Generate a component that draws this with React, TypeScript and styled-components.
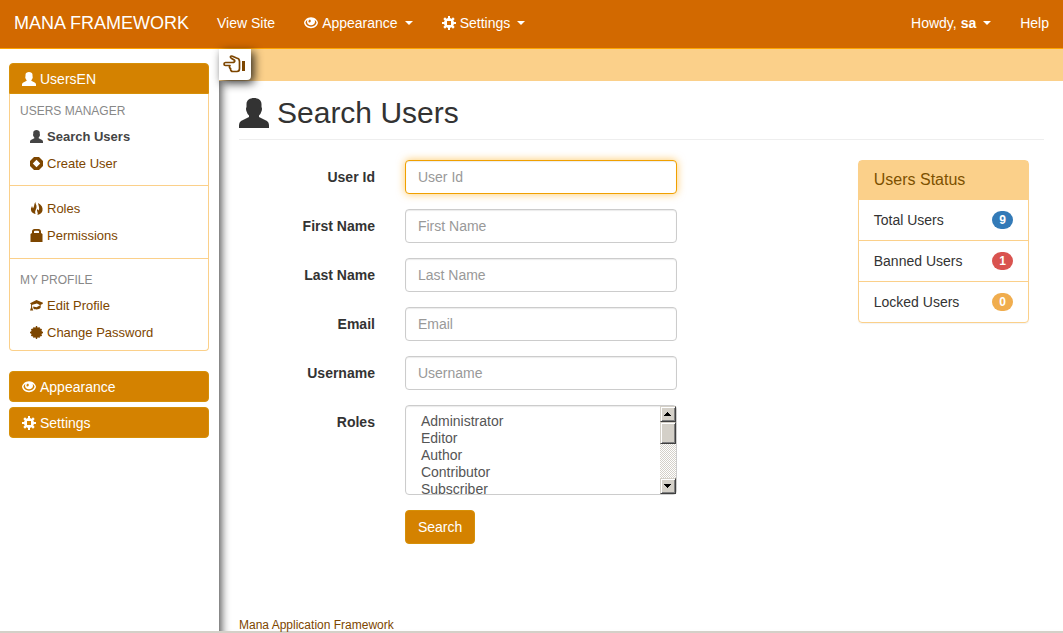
import React from 'react';
import styled, { createGlobalStyle, css } from 'styled-components';

const Global = createGlobalStyle`
  *, *::before, *::after { box-sizing: border-box; }
  body {
    margin: 0;
    background: #fff;
    color: #333;
    font: 14px/20px "Liberation Sans", Arial, sans-serif;
  }
  a { color: #7d4600; text-decoration: none; }
`;

const Page = styled.div`
  min-height: 100vh;
  display: flex;
  flex-direction: column;
  border-bottom: 2px solid #d4d0c8;
`;

const Navbar = styled.nav`
  display: flex;
  align-items: center;
  height: 49px;
  padding: 0 0 2px;
  background: #d26900;
  border-bottom: 1px solid #ffa500;
`;

const Brand = styled.a`
  padding: 0 13px 0 14px;
  font-size: 18px;
  color: #fff;
`;

const NavGroup = styled.div<{ $right?: boolean }>`
  display: flex;
  ${(p) => p.$right && css`margin-left: auto;`}
`;

const NavLink = styled.a`
  display: flex;
  align-items: center;
  gap: 4px;
  padding: 0 14px 0 15px;
  color: #fff;
`;

const Caret = styled.span`
  margin-left: 3px;
  border-top: 4px solid #fff;
  border-left: 4px solid transparent;
  border-right: 4px solid transparent;
`;

const Columns = styled.div`
  flex: 1;
  display: flex;
`;

const Sidebar = styled.aside`
  flex: 0 0 219px;
  padding: 14px 10px 0 9px;
`;

const SideToggle = styled.button<{ $open?: boolean }>`
  display: flex;
  align-items: center;
  gap: 4px;
  width: 100%;
  height: 31px;
  padding: 0 12px;
  font: inherit;
  color: #fff;
  background: #d48200;
  border: 1px solid #d69008;
  border-radius: ${(p) => (p.$open ? '4px 4px 0 0' : '4px')};
`;

const SidePanel = styled.section`
  & + & { margin-top: 5px; }
`;

const SideBody = styled.div`
  margin-bottom: 20px;
  border: 1px solid #fbd08a;
  border-top: 0;
  border-radius: 0 0 4px 4px;
`;

const SideGroup = styled.div`
  padding: 8px 10px;
  & + & { padding: 9px 10px; border-top: 1px solid #fbd08a; }
  & + &:last-child { padding: 12px 10px 4px; }
`;

const SideTitle = styled.h2`
  margin: 0 0 3px;
  font-size: 12px;
  line-height: 18px;
  font-weight: 400;
  text-transform: uppercase;
  color: #888;
`;

const SideLink = styled.a<{ $active?: boolean }>`
  display: flex;
  align-items: center;
  gap: 4px;
  height: 27px;
  padding-left: 10px;
  font-size: 13px;
  ${(p) => p.$active && css`color: #444; font-weight: 700;`}
`;

const Main = styled.main`
  flex: 1;
  min-width: 0;
  display: flex;
  flex-direction: column;
  box-shadow: inset 11px 0 10px -9px rgba(0, 0, 0, 0.75);
`;

const TopBand = styled.div`
  height: 32px;
  background: #fbd08a;
`;

const HideButton = styled.button`
  display: flex;
  align-items: center;
  justify-content: center;
  width: 32px;
  height: 31px;
  padding: 0 2px 2px 0;
  color: #7d4600;
  background: #fff;
  border: 0;
  border-radius: 0 0 4px 0;
  box-shadow: 3px 3px 10px rgba(0, 0, 0, 0.8);
`;

const Content = styled.div`
  flex: 1;
  display: flex;
  flex-direction: column;
  padding: 0 19px 0 20px;
`;

const Title = styled.h1`
  display: flex;
  align-items: center;
  gap: 8px;
  margin: 0 0 20px;
  padding: 16px 0 10px;
  font-size: 30px;
  line-height: 32px;
  font-weight: 400;
  border-bottom: 1px solid #eee;
`;

const Split = styled.div`
  display: grid;
  grid-template-columns: 3fr 1fr;
  align-items: start;
`;

const Form = styled.form`
  display: grid;
  gap: 15px;
`;

const Field = styled.div`
  display: grid;
  grid-template-columns: 1fr 2fr 1fr;
`;

const Label = styled.label`
  padding: 7px 15px 0;
  text-align: right;
  font-weight: 700;
`;

const Control = styled.div`
  display: flex;
  grid-column: 2;
  padding: 0 15px;
`;

const inputBox = css`
  width: 100%;
  font: inherit;
  color: #555;
  background: #fff;
  border: 1px solid #ccc;
  border-radius: 4px;
  outline: 0;
  box-shadow: inset 0 1px 1px rgba(0, 0, 0, 0.08);
`;

const Input = styled.input<{ $lit?: boolean }>`
  ${inputBox}
  height: 34px;
  padding: 6px 12px;
  &::placeholder { color: #999; }
  ${(p) => p.$lit && css`
    border-color: #f0a000;
    box-shadow: inset 0 1px 1px rgba(0, 0, 0, 0.08), 0 0 8px rgba(255, 165, 0, 0.6);
  `}
`;

const ListFrame = styled.div`
  position: relative;
  width: 100%;
  height: 90px;
`;

const List = styled.select`
  ${inputBox}
  display: block;
  height: 100%;
  padding: 7px 0 0 13px;
  overflow-y: scroll;
  scrollbar-width: none;
  option { padding: 0 2px; min-height: 17px; line-height: 17px; }
`;

/* Classic bevelled scrollbar lying over the list's right edge. */
const ScrollTrack = styled.div`
  position: absolute;
  top: 1px;
  right: 1px;
  bottom: 1px;
  width: 16px;
  display: flex;
  flex-direction: column;
  pointer-events: none;
  background: repeating-conic-gradient(#fff 0 25%, #d4d0c8 0 50%) 0 0 / 2px 2px;
`;

const ScrollPart = styled.span<{ $thumb?: boolean; $end?: boolean }>`
  display: flex;
  align-items: center;
  justify-content: center;
  height: ${(p) => (p.$thumb ? 22 : 16)}px;
  ${(p) => p.$end && css`margin-top: auto;`}
  background: #d4d0c8;
  border: 1px solid;
  border-color: #d4d0c8 #404040 #404040 #d4d0c8;
  box-shadow: inset 1px 1px #fff, inset -1px -1px #808080;
`;

const ScrollArrow = ({ down }: { down?: boolean }) => (
  <svg width="7" height="4" viewBox="0 0 7 4" shapeRendering="crispEdges">
    <path d={down ? 'M0 0h7v1H6v1H5v1H4v1H3V3H2V2H1V1H0z' : 'M3 0h1v1h1v1h1v1h1v1H0V3h1V2h1V1h1z'} />
  </svg>
);

const Submit = styled.button`
  height: 34px;
  padding: 0 12px;
  font: inherit;
  color: #fff;
  background: #d48200;
  border: 1px solid #d69008;
  border-radius: 4px;
`;

const Status = styled.section`
  margin: 0 15px;
  border: 1px solid #fbd08a;
  border-radius: 4px;
  box-shadow: 0 1px 1px rgba(0, 0, 0, 0.05);
`;

const StatusTitle = styled.h3`
  margin: 0;
  padding: 9px 15px 10px;
  font-size: 16px;
  font-weight: 400;
  color: #7d5000;
  background: #fbd08a;
`;

const StatusList = styled.ul`
  margin: 0;
  padding: 0;
  list-style: none;
`;

const StatusRow = styled.li`
  display: flex;
  align-items: center;
  justify-content: space-between;
  height: 40px;
  padding: 0 15px;
  & + & { height: 41px; border-top: 1px solid #fbd08a; }
`;

const Badge = styled.span<{ $color: string }>`
  padding: 3px 7px;
  font-size: 12px;
  line-height: 12px;
  font-weight: 700;
  color: #fff;
  background: ${(p) => p.$color};
  border-radius: 10px;
`;

const Footer = styled.footer`
  margin-top: auto;
  padding-top: 20px;
  font-size: 12px;
  line-height: 12px;
`;

const icons = {
  user: { box: 30, d: 'M15 0c4 0 7.500 2 7.500 6v3c.9 1.500.5 4-.5 5.500-.5 1.500-1 2-2 3V19l8 4q2 1.500 2 4v3H0v-3q0-2.500 2-4l8-4v-1.500c-1-1-1.500-1.500-2-3C7 13 6.600 10.500 7.500 9V6C7.500 2 11 0 15 0z' },
  eye: { box: 14, d: 'M7 1.300c4 0 6.500 3 7 5.500-.5 2.700-3 5.400-7 5.400S.5 9.500 0 6.800c.5-2.500 3-5.500 7-5.500zM3.400 4C2.300 4.700 1.600 5.700 1.500 6.800 2 8.800 4 10.700 7 10.700s5-1.900 5.500-3.900c-.1-1.100-.8-2.100-1.900-2.800.3.600.4 1.200.4 1.800C11 7.900 9.200 9.300 7 9.300S3 7.900 3 5.800c0-.6.1-1.200.4-1.800zM6 3.500c-1.200.4-1.800 1.500-1.400 2.700L6 6.500 7 5z' },
  cog: { box: 14, d: 'M6 0h2v2l1.600.7L11 1.300 12.700 3l-1.400 1.400L12 6h2v2h-2l-.7 1.600 1.400 1.400-1.700 1.700-1.400-1.400L8 12v2H6v-2l-1.600-.7L3 12.700 1.300 11l1.400-1.400L2 8H0V6h2l.7-1.600L1.300 3 3 1.300l1.400 1.400L6 2zM5 5v4h4V5z' },
  plus: { box: 13, d: 'M4 0h5l4 4v5l-4 4H4L0 9V4zM6.500 2.800L2.800 6.500l3.700 3.700 3.700-3.700z' },
  fire: { box: 13, d: 'M5.500 0C5 2 7 3 6.500 5.500 6.200 8 4.500 8.500 5.500 12 2.500 11.500.6 9.500 1 6.500L2 4l1 2.500C4.500 4 4 1.500 5.500 0zM8 1c3.500 1.500 5 4.500 4.500 7.500-.3 2-2 3.500-5 4.500C8.500 11 6.500 9 7 7l1.600 1.500C10 6 8.500 4 8 1z' },
  lock: { box: 13, d: 'M2 4V2.500C2 1 3 0 4.500 0h4C10 0 11 1 11 2.500V4l1.500 1v8H.5V5zM4 4h5V2.500c0-.4-.4-.7-1-.7H5c-.6 0-1 .3-1 .7z' },
  cap: { box: 14, d: 'M0 4.500L7 1l7 3-.5 1.500-2 .8V9.500C10 11.500 5 12 3.500 10V8L7 8.800l4-2-3.500-2L2.500 6.300C1.800 7 2.500 8 2.300 9L3.500 12.500H0L1.200 9V5.800z' },
  burst: { box: 13, d: 'M6 0h1l.7 1.700L9.500 1l.4 1.500L12 3l-.5 1.900L13 6v1l-1.500 1.100L12 10l-2.100.5-.4 1.500-1.800-.7L7 13H6l-.7-1.700L3.500 12l-.4-1.500L1 10l.5-1.900L0 7V6l1.500-1.100L1 3l2.100-.5L3.500 1l1.800.7z' },
};

type IconName = keyof typeof icons;

const IconSvg = styled.svg`
  flex: none;
  display: block;
  fill: currentColor;
  fill-rule: evenodd;
`;

const Icon = ({ name, size = 14 }: { name: IconName; size?: number }) => (
  <IconSvg width={size} height={size} viewBox={`0 0 ${icons[name].box} ${icons[name].box}`} aria-hidden="true">
    <path d={icons[name].d} />
  </IconSvg>
);

const HandLeft = () => (
  <svg width="22" height="18" viewBox="0 0 22 18" fill="none" stroke="currentColor" strokeWidth="1.700" strokeLinejoin="round" aria-hidden="true">
    <path d="M9.500 7.500H2.500C.5 7.700.5 10.300 2.500 10.500H7c-1 1.200-.6 2.600.6 3-.3 1.700.6 3 2.400 3H14c1.500 0 2.500-1.500 2.500-3V6.500C16.500 4.500 15.500 3.300 13.500 3L9.500 1.200C7.500.6 6.800 2 8.300 3.200L11.500 5.300C12.300 6.500 11 7.500 9.500 7.500z" />
    <path d="M19 6h3v10h-3z" fill="currentColor" stroke="none" />
  </svg>
);

const SideItem = ({ icon, text, active }: { icon: IconName; text: string; active?: boolean }) => (
  <SideLink href="#" $active={active}>
    <Icon name={icon} size={13} />
    {text}
  </SideLink>
);

const fields = [
  { id: 'userId', label: 'User Id' },
  { id: 'firstName', label: 'First Name' },
  { id: 'lastName', label: 'Last Name' },
  { id: 'email', label: 'Email' },
  { id: 'username', label: 'Username' },
];

const roles = ['Administrator', 'Editor', 'Author', 'Contributor', 'Subscriber'];

const statuses = [
  { label: 'Total Users', count: 9, color: '#337ab7' },
  { label: 'Banned Users', count: 1, color: '#d9534f' },
  { label: 'Locked Users', count: 0, color: '#f0ad4e' },
];

export default function App() {
  return (
    <Page>
      <Global />
      <Navbar>
        <Brand href="#">MANA FRAMEWORK</Brand>
        <NavGroup>
          <NavLink href="#">View Site</NavLink>
          <NavLink href="#"><Icon name="eye" />Appearance<Caret /></NavLink>
          <NavLink href="#"><Icon name="cog" />Settings<Caret /></NavLink>
        </NavGroup>
        <NavGroup $right>
          <NavLink href="#"><span>Howdy, <strong>sa</strong></span><Caret /></NavLink>
          <NavLink href="#">Help</NavLink>
        </NavGroup>
      </Navbar>
      <Columns>
        <Sidebar>
          <SidePanel>
            <SideToggle type="button" $open aria-expanded="true"><Icon name="user" />UsersEN</SideToggle>
            <SideBody>
              <SideGroup>
                <SideTitle>Users Manager</SideTitle>
                <SideItem icon="user" text="Search Users" active />
                <SideItem icon="plus" text="Create User" />
              </SideGroup>
              <SideGroup>
                <SideItem icon="fire" text="Roles" />
                <SideItem icon="lock" text="Permissions" />
              </SideGroup>
              <SideGroup>
                <SideTitle>My Profile</SideTitle>
                <SideItem icon="cap" text="Edit Profile" />
                <SideItem icon="burst" text="Change Password" />
              </SideGroup>
            </SideBody>
          </SidePanel>
          <SidePanel>
            <SideToggle type="button" aria-expanded="false"><Icon name="eye" />Appearance</SideToggle>
          </SidePanel>
          <SidePanel>
            <SideToggle type="button" aria-expanded="false"><Icon name="cog" />Settings</SideToggle>
          </SidePanel>
        </Sidebar>
        <Main>
          <TopBand>
            <HideButton type="button" aria-label="Hide sidebar"><HandLeft /></HideButton>
          </TopBand>
          <Content>
            <Title><Icon name="user" size={30} />Search Users</Title>
            <Split>
              <Form>
                {fields.map((f, i) => (
                  <Field key={f.id}>
                    <Label htmlFor={f.id}>{f.label}</Label>
                    <Control><Input id={f.id} placeholder={f.label} $lit={i === 0} /></Control>
                  </Field>
                ))}
                <Field>
                  <Label htmlFor="roles">Roles</Label>
                  <Control>
                    <ListFrame>
                      <List id="roles" multiple>
                        {roles.map((r) => <option key={r}>{r}</option>)}
                      </List>
                      <ScrollTrack aria-hidden="true">
                        <ScrollPart><ScrollArrow /></ScrollPart>
                        <ScrollPart $thumb />
                        <ScrollPart $end><ScrollArrow down /></ScrollPart>
                      </ScrollTrack>
                    </ListFrame>
                  </Control>
                </Field>
                <Field>
                  <Control><Submit type="button">Search</Submit></Control>
                </Field>
              </Form>
              <Status>
                <StatusTitle>Users Status</StatusTitle>
                <StatusList>
                  {statuses.map((s) => (
                    <StatusRow key={s.label}>{s.label}<Badge $color={s.color}>{s.count}</Badge></StatusRow>
                  ))}
                </StatusList>
              </Status>
            </Split>
            <Footer><a href="#">Mana Application Framework</a></Footer>
          </Content>
        </Main>
      </Columns>
    </Page>
  );
}
